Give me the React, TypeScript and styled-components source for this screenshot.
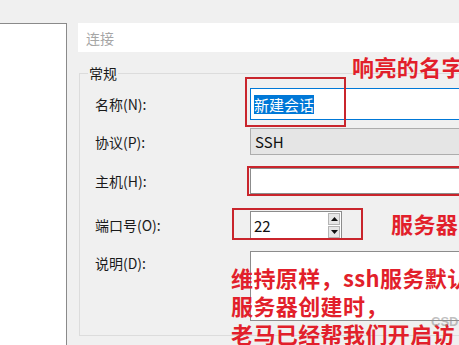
import { createGlobalStyle, styled } from "styled-components";

const GlobalStyle = createGlobalStyle`
  body {
    margin: 0;
    background: #f0f0f0;
    font-family: "Noto Sans CJK SC", "Noto Sans", sans-serif;
  }
`;

const Window = styled.div`
  position: relative;
  width: 459px;
  height: 345px;
  overflow: hidden;
  box-sizing: border-box;
  padding-top: 23px;
  display: flex;
  column-gap: 11px;
  background: #f0f0f0;
`;

const TreePanel = styled.div`
  flex: 0 0 66px;
  background: #ffffff;
  border-top: 1px solid #8a8a8a;
  border-right: 1px solid #8a8a8a;
`;

const Content = styled.div`
  flex: 0 0 440px;
  display: flex;
  flex-direction: column;
`;

const Breadcrumb = styled.div`
  height: 29px;
  background: #ffffff;
  padding-left: 8px;
  display: flex;
  align-items: center;
  color: #a6a6a6;
  font-size: 14px;
`;

const GroupBox = styled.div`
  position: relative;
  margin: 21px 0 0 1px;
  height: 263px;
  box-sizing: border-box;
  border: 1px solid #dcdcdc;
  padding: 14px 0 0 15px;
`;

const Legend = styled.span`
  position: absolute;
  top: -10px;
  left: 8px;
  padding: 0 1px;
  background: #f0f0f0;
  color: #1a1a1a;
  font-size: 14px;
  line-height: 18px;
`;

const Row = styled.div<{ $mt: number; $h: number; $top?: boolean }>`
  display: flex;
  align-items: ${({ $top }) => ($top ? "flex-start" : "center")};
  margin-top: ${({ $mt }) => $mt}px;
  height: ${({ $h }) => $h}px;
`;

const Label = styled.label<{ $pt?: number }>`
  flex: 0 0 155px;
  padding-top: ${({ $pt }) => $pt ?? 0}px;
  color: #1a1a1a;
  font-size: 14px;
  line-height: 18px;
`;

const TextBox = styled.div<{ $focus?: boolean; $w?: number }>`
  box-sizing: border-box;
  height: 100%;
  ${({ $w }) => ($w ? `flex: 0 0 ${$w}px;` : "flex: 1;")}
  background: #ffffff;
  border: 1px solid ${({ $focus }) => ($focus ? "#0078d7" : "#8c8c8c")};
  padding-left: 3px;
  display: flex;
  align-items: center;
  color: #111111;
  font-size: 15px;
`;

const Selected = styled.span`
  background: #0078d7;
  color: #ffffff;
  line-height: 19px;
`;

const Select = styled.div`
  box-sizing: border-box;
  height: 100%;
  flex: 1;
  background: #e5e5e5;
  border: 1px solid #adadad;
  padding-left: 4px;
  display: flex;
  align-items: center;
  color: #111111;
  font-size: 15px;
`;

const PortValue = styled.span`
  flex: 1;
`;

const Spinner = styled.div`
  display: flex;
  flex-direction: column;
  row-gap: 1px;
  margin-right: 1px;
`;

const SpinButton = styled.div`
  box-sizing: border-box;
  width: 12px;
  height: 12px;
  background: #e6e6e6;
  border: 1px solid #b4b4b4;
  display: flex;
  align-items: center;
  justify-content: center;
`;

const Callout = styled.div<{ $x: number; $y: number; $w: number; $h: number }>`
  position: absolute;
  left: ${({ $x }) => $x}px;
  top: ${({ $y }) => $y}px;
  width: ${({ $w }) => $w}px;
  height: ${({ $h }) => $h}px;
  box-sizing: border-box;
  border: 2px solid #c9252c;
  pointer-events: none;
`;

const Note = styled.div<{ $x: number; $y: number }>`
  position: absolute;
  left: ${({ $x }) => $x}px;
  top: ${({ $y }) => $y}px;
  color: #e21f2b;
  font-size: 22px;
  font-weight: 700;
  line-height: 28px;
  letter-spacing: 0.4px;
  white-space: nowrap;
`;

const Watermark = styled.span`
  position: absolute;
  left: 431px;
  top: 314px;
  color: rgba(140, 140, 140, 0.55);
  font-family: "Liberation Sans", sans-serif;
  font-size: 13px;
  font-weight: 700;
`;

const Arrow = ({ up }: { up?: boolean }) => (
  <svg width="7" height="4" viewBox="0 0 7 4">
    <path d={up ? "M0 4 L3.5 0 L7 4 Z" : "M0 0 L3.5 4 L7 0 Z"} fill="#111" />
  </svg>
);

export default function App() {
  return (
    <>
      <GlobalStyle />
      <Window>
        <TreePanel />
        <Content>
          <Breadcrumb>连接</Breadcrumb>
          <GroupBox>
            <Legend>常规</Legend>
            <Row $mt={0} $h={32}>
              <Label>名称(N):</Label>
              <TextBox $focus>
                <Selected>新建会话</Selected>
              </TextBox>
            </Row>
            <Row $mt={8} $h={27}>
              <Label>协议(P):</Label>
              <Select>SSH</Select>
            </Row>
            <Row $mt={13} $h={26}>
              <Label>主机(H):</Label>
              <TextBox />
            </Row>
            <Row $mt={17} $h={28}>
              <Label>端口号(O):</Label>
              <TextBox $w={92}>
                <PortValue>22</PortValue>
                <Spinner>
                  <SpinButton>
                    <Arrow up />
                  </SpinButton>
                  <SpinButton>
                    <Arrow />
                  </SpinButton>
                </Spinner>
              </TextBox>
            </Row>
            <Row $mt={12} $h={70} $top>
              <Label $pt={3}>说明(D):</Label>
              <TextBox />
            </Row>
          </GroupBox>
        </Content>

        <Callout $x={245} $y={77} $w={101} $h={50} />
        <Callout $x={247} $y={166} $w={230} $h={30} />
        <Callout $x={232} $y={208} $w={131} $h={32} />

        <Note $x={352} $y={52}>响亮的名字</Note>
        <Note $x={391} $y={209}>服务器</Note>
        <Note $x={231} $y={263}>
          维持原样，ssh服务默认
          <br />
          服务器创建时，
          <br />
          老马已经帮我们开启访
        </Note>
        <Watermark>CSDN</Watermark>
      </Window>
    </>
  );
}
